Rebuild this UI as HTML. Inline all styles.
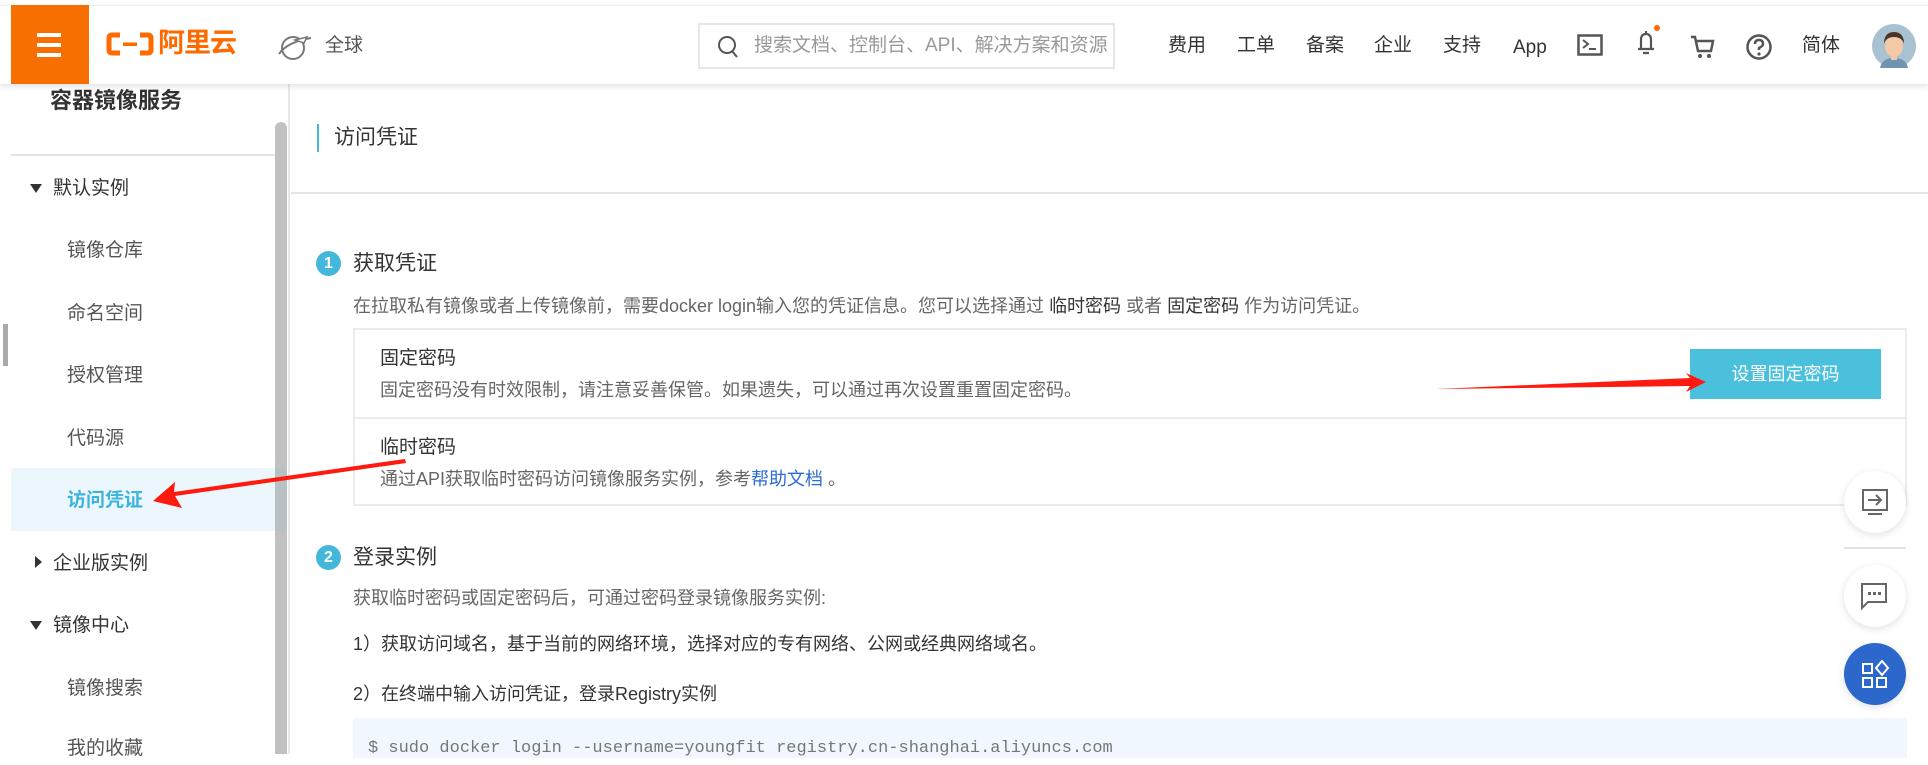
<!DOCTYPE html>
<html><head><meta charset="utf-8">
<style>
*{margin:0;padding:0;box-sizing:border-box}
body{width:1928px;height:754px;overflow:hidden;background:#fff;font-family:"Liberation Sans","Noto Sans CJK SC",sans-serif;color:#333;position:relative}
.a{position:absolute;white-space:nowrap;line-height:1.3}
.hdr{position:absolute;left:0;top:5px;width:1928px;height:79px;background:#fff;box-shadow:0 3px 6px rgba(0,0,0,.1);z-index:5;border-top:1px solid #eee}
.nav{font-size:19px;color:#333;top:28px;line-height:24px}
.side{position:absolute;left:11px;top:84px;width:279px;height:670px;border-right:2px solid #e8e8e8}
.mi{font-size:19px;color:#555;left:67px}
.mg{font-size:19px;color:#333;left:53px}
.d{font-size:18px;color:#666}
.t{font-size:19px;color:#333}
.mi,.mg,.d,.t,.lh{line-height:1.7}
.circ{position:absolute;width:25px;height:25px;border-radius:50%;background:#44b7dc;color:#fff;font-size:16px;text-align:center;line-height:25px;font-weight:bold}
.fb{position:absolute;left:1844px;width:62px;height:62px;border-radius:50%;background:#fff;box-shadow:0 2px 8px rgba(0,0,0,.12)}
</style></head><body>
<div class="hdr">
 <div class="a" style="left:11px;top:-1px;width:78px;height:79px;background:#f66f00"></div>
 <div class="a" style="left:37px;top:27px;width:24px;height:4px;background:#fff"></div>
 <div class="a" style="left:37px;top:37px;width:24px;height:4px;background:#fff"></div>
 <div class="a" style="left:37px;top:47px;width:24px;height:4px;background:#fff"></div>
 <svg class="a" style="left:106px;top:26px" width="48" height="24" viewBox="0 0 48 24"><path d="M14 3H6Q3 3 3 6V18Q3 21 6 21H14M34 3H42Q45 3 45 6V18Q45 21 42 21H34" stroke="#ff6a00" stroke-width="5" fill="none"/><rect x="17" y="10.5" width="14" height="3.5" fill="#ff6a00"/></svg>
 <div class="a" style="left:158px;top:20px;font-size:27px;font-weight:bold;color:#ff6a00;letter-spacing:-1px">阿里云</div>
 <svg class="a" style="left:277px;top:26px" width="36" height="32" viewBox="0 0 36 32"><circle cx="16" cy="16" r="11" fill="none" stroke="#777" stroke-width="2"/><path d="M2 22Q10 10 34 6" stroke="#777" stroke-width="2" fill="none"/><path d="M18 8l12-3-3 6z" fill="#fff" stroke="#777" stroke-width="1.5"/></svg>
 <div class="a" style="left:325px;top:28px;font-size:19px;color:#555;line-height:24px">全球</div>
 <div class="a" style="left:698px;top:17px;width:417px;height:46px;border:2px solid #e6e6e6"></div>
 <svg class="a" style="left:717px;top:29px" width="22" height="24" viewBox="0 0 22 24"><circle cx="10" cy="10" r="8" fill="none" stroke="#555" stroke-width="2"/><path d="M15 16l5 6" stroke="#555" stroke-width="2"/></svg>
 <div class="a" style="left:754px;top:28px;font-size:19px;color:#999;line-height:24px">搜索文档、控制台、API、解决方案和资源</div>
 <div class="a nav" style="left:1168px">费用</div>
 <div class="a nav" style="left:1237px">工单</div>
 <div class="a nav" style="left:1306px">备案</div>
 <div class="a nav" style="left:1374px">企业</div>
 <div class="a nav" style="left:1443px">支持</div>
 <div class="a nav" style="left:1513px;top:30px">App</div>
 <svg class="a" style="left:1577px;top:28px" width="26" height="22" viewBox="0 0 26 22"><rect x="1.5" y="1.5" width="23" height="19" fill="none" stroke="#555" stroke-width="2.5"/><path d="M6 6l5 4-5 4M12 15h7" stroke="#555" stroke-width="2" fill="none"/></svg>
 <svg class="a" style="left:1634px;top:18px" width="28" height="34" viewBox="0 0 28 34"><circle cx="23" cy="4" r="3" fill="#ff6a00"/><path d="M12 7v3M7 24V16Q7 10 12 10Q17 10 17 16V24M4 25h16M9 29h6" stroke="#555" stroke-width="2.2" fill="none"/></svg>
 <svg class="a" style="left:1690px;top:28px" width="26" height="26" viewBox="0 0 26 26"><path d="M1 3h4l3 14h13l2-10H7" stroke="#555" stroke-width="2.5" fill="none"/><circle cx="10" cy="22" r="2" fill="#555"/><circle cx="19" cy="22" r="2" fill="#555"/></svg>
 <svg class="a" style="left:1745px;top:27px" width="28" height="28" viewBox="0 0 28 28"><circle cx="14" cy="14" r="11.5" fill="none" stroke="#555" stroke-width="2.5"/><path d="M10 11Q10 7 14 7Q18 7 18 11Q18 13 14 15V17" stroke="#555" stroke-width="2.5" fill="none"/><circle cx="14" cy="21" r="1.6" fill="#555"/></svg>
 <div class="a nav" style="left:1802px">简体</div>
 <svg class="a" style="left:1872px;top:18px" width="44" height="44" viewBox="0 0 44 44"><circle cx="22" cy="22" r="22" fill="#a9c2d2"/><path d="M8 44Q10 34 22 34Q34 34 36 44z" fill="#6f93b3"/><ellipse cx="22" cy="22" rx="9" ry="11" fill="#f3c9a7"/><path d="M12 20Q12 8 22 8Q32 8 32 20Q30 13 22 13Q14 13 12 20z" fill="#4a3327"/><rect x="19" y="32" width="6" height="4" fill="#f3c9a7"/></svg>
</div>

<div class="side"></div>
<div class="a lh" style="left:50px;top:82px;font-size:22px;font-weight:bold;color:#333">容器镜像服务</div>
<div class="a" style="left:11px;top:154px;width:265px;height:2px;background:#e3e3e3"></div>
<div class="a" style="left:275px;top:122px;width:12px;height:632px;background:#c1c1c1;border-radius:6px 6px 0 0"></div>
<div class="a" style="left:3px;top:324px;width:5px;height:42px;background:#aaa"></div>
<div class="a" style="left:30px;top:184px;width:0;height:0;border-left:6px solid transparent;border-right:6px solid transparent;border-top:9px solid #333"></div>
<div class="a mg" style="top:173px">默认实例</div>
<div class="a mi" style="top:235px">镜像仓库</div>
<div class="a mi" style="top:298px">命名空间</div>
<div class="a mi" style="top:360px">授权管理</div>
<div class="a mi" style="top:423px">代码源</div>
<div class="a" style="left:11px;top:468px;width:264px;height:63px;background:#ebf7fd"></div>
<div class="a" style="left:275px;top:468px;width:12px;height:63px;background:#b7c0c3"></div>
<div class="a mi" style="top:485px;color:#3fb3dc;font-weight:bold">访问凭证</div>
<div class="a" style="left:35px;top:556px;width:0;height:0;border-top:6px solid transparent;border-bottom:6px solid transparent;border-left:7px solid #333"></div>
<div class="a mg" style="top:548px">企业版实例</div>
<div class="a" style="left:30px;top:621px;width:0;height:0;border-left:6px solid transparent;border-right:6px solid transparent;border-top:9px solid #333"></div>
<div class="a mg" style="top:610px">镜像中心</div>
<div class="a mi" style="top:673px">镜像搜索</div>
<div class="a mi" style="top:733px">我的收藏</div>

<div class="a" style="left:317px;top:124px;width:2px;height:28px;background:#44b7dc"></div>
<div class="a lh" style="left:334px;top:120px;font-size:21px;color:#333">访问凭证</div>
<div class="a" style="left:291px;top:192px;width:1637px;height:2px;background:#e6e6e6"></div>

<div class="circ" style="left:316px;top:251px">1</div>
<div class="a lh" style="left:353px;top:246px;font-size:21px;color:#333">获取凭证</div>
<div class="a d" style="left:353px;top:291px">在拉取私有镜像或者上传镜像前，需要docker login输入您的凭证信息。您可以选择通过 <span style="color:#333">临时密码</span> 或者 <span style="color:#333">固定密码</span> 作为访问凭证。</div>
<div class="a" style="left:353px;top:328px;width:1554px;height:178px;border:2px solid #ececf0"></div>
<div class="a" style="left:355px;top:417px;width:1550px;height:2px;background:#ececf0"></div>
<div class="a t" style="left:380px;top:343px">固定密码</div>
<div class="a d" style="left:380px;top:375px">固定密码没有时效限制，请注意妥善保管。如果遗失，可以通过再次设置重置固定密码。</div>
<div class="a" style="left:1690px;top:349px;width:191px;height:50px;background:#4bc0dd;color:#fff;font-size:18px;text-align:center;line-height:50px">设置固定密码</div>
<div class="a t" style="left:380px;top:432px">临时密码</div>
<div class="a d" style="left:380px;top:464px">通过API获取临时密码访问镜像服务实例，参考<span style="color:#2a6bd6">帮助文档</span> 。</div>

<div class="circ" style="left:316px;top:545px">2</div>
<div class="a lh" style="left:353px;top:540px;font-size:21px;color:#333">登录实例</div>
<div class="a d" style="left:353px;top:583px">获取临时密码或固定密码后，可通过密码登录镜像服务实例:</div>
<div class="a t" style="left:353px;top:629px;font-size:18px">1）获取访问域名，基于当前的网络环境，选择对应的专有网络、公网或经典网络域名。</div>
<div class="a t" style="left:353px;top:679px;font-size:18px">2）在终端中输入访问凭证，登录Registry实例</div>
<div class="a" style="left:353px;top:718px;width:1554px;height:40px;background:#f1f7fe"></div>
<div class="a" style="left:368px;top:738px;font-family:'Liberation Mono',monospace;font-size:17px;color:#777">$ sudo docker login --username=youngfit registry.cn-shanghai.aliyuncs.com</div>

<svg class="a" style="left:0;top:0;z-index:6" width="1928" height="754"><path d="M1436 389L1690 378L1686 373L1706 382L1686 392L1690 386Z" fill="#ff1a0f"/><path d="M405 459L406 463L175 496L182 508L153 501L175 482L174 492Z" fill="#ff1a0f"/></svg>

<div class="fb" style="top:471px"><svg style="position:absolute;left:17px;top:17px" width="28" height="30" viewBox="0 0 28 30"><rect x="2" y="2" width="24" height="20" fill="none" stroke="#666" stroke-width="2"/><path d="M7 12h13M15 7l5 5-5 5M7 26h14" stroke="#666" stroke-width="2" fill="none"/></svg></div>
<div class="a" style="left:1844px;top:547px;width:62px;height:2px;background:#e3e3e3"></div>
<div class="fb" style="top:565px"><svg style="position:absolute;left:16px;top:17px" width="30" height="30" viewBox="0 0 30 30"><path d="M2 2h24v18H8l-6 6z" fill="none" stroke="#666" stroke-width="2"/><rect x="8" y="10" width="3" height="3" fill="#666"/><rect x="13" y="10" width="3" height="3" fill="#666"/><rect x="18" y="10" width="3" height="3" fill="#666"/></svg></div>
<div class="fb" style="top:643px;background:#2c67cc"><svg style="position:absolute;left:17px;top:17px" width="30" height="30" viewBox="0 0 30 30"><rect x="2" y="4" width="9" height="9" fill="none" stroke="#fff" stroke-width="2"/><path d="M21 1l6 7-6 7-6-7z" fill="none" stroke="#fff" stroke-width="2"/><rect x="2" y="18" width="9" height="9" fill="none" stroke="#fff" stroke-width="2"/><rect x="16" y="18" width="9" height="9" fill="none" stroke="#fff" stroke-width="2"/></svg></div>
</body></html>
